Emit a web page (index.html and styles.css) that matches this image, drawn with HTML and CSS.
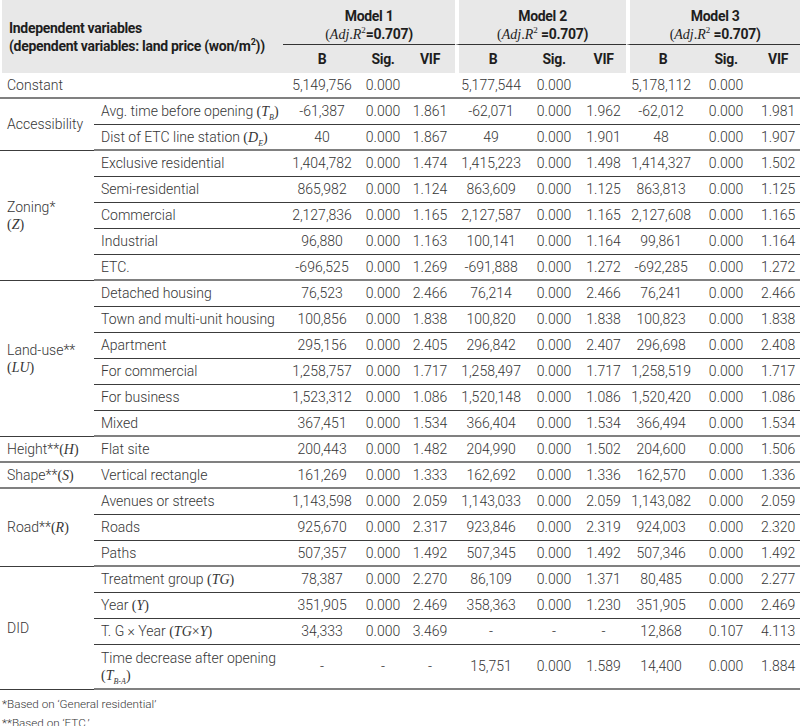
FILE: index.html
```html
<!DOCTYPE html>
<html>
<head>
<meta charset="utf-8">
<link rel="stylesheet" href="styles.css">
</head>
<body>
<table class="tbl">
<colgroup>
<col class="c-cat"><col class="c-item">
<col class="c-m1b"><col class="c-m1s"><col class="c-m1v">
<col class="c-m2b"><col class="c-m2s"><col class="c-m2v">
<col class="c-m3b"><col class="c-m3s"><col class="c-m3v">
</colgroup>
<thead>
<tr class="h1">
<th class="hl" colspan="2" rowspan="2">Independent variables<br>(dependent variables: land price (won/m<sup>2</sup>))</th>
<th class="hm" colspan="3"><div>Model 1</div><div><span class="m">(<i>Adj</i>.<i>R</i><sup>2</sup></span>=0.707)</div></th>
<th class="hm gap" colspan="3"><div>Model 2</div><div><span class="m">(<i>Adj</i>.<i>R</i><sup>2</sup></span> =0.707)</div></th>
<th class="hm gap" colspan="3"><div>Model 3</div><div><span class="m">(<i>Adj</i>.<i>R</i><sup>2</sup></span> =0.707)</div></th>
</tr>
<tr class="h2">
<th>B</th><th>Sig.</th><th>VIF</th>
<th class="gap">B</th><th>Sig.</th><th>VIF</th>
<th class="gap">B</th><th>Sig.</th><th>VIF</th>
</tr>
</thead>
<tbody>
<tr class="g">
<td class="cat" colspan="2">Constant</td>
<td>5,149,756</td><td>0.000</td><td></td>
<td>5,177,544</td><td>0.000</td><td></td>
<td>5,178,112</td><td>0.000</td><td></td>
</tr>
<tr class="s">
<td class="cat gb" rowspan="2">Accessibility</td>
<td class="item">Avg. time before opening <span class="m">(<i>T</i><sub>B</sub>)</span></td>
<td>-61,387</td><td>0.000</td><td>1.861</td>
<td>-62,071</td><td>0.000</td><td>1.962</td>
<td>-62,012</td><td>0.000</td><td>1.981</td>
</tr>
<tr class="g">
<td class="item">Dist of ETC line station <span class="m">(<i>D</i><sub>E</sub>)</span></td>
<td>40</td><td>0.000</td><td>1.867</td>
<td>49</td><td>0.000</td><td>1.901</td>
<td>48</td><td>0.000</td><td>1.907</td>
</tr>
<tr class="s">
<td class="cat gb" rowspan="5">Zoning*<br><span class="m">(<i>Z</i>)</span></td>
<td class="item">Exclusive residential</td>
<td>1,404,782</td><td>0.000</td><td>1.474</td>
<td>1,415,223</td><td>0.000</td><td>1.498</td>
<td>1,414,327</td><td>0.000</td><td>1.502</td>
</tr>
<tr class="s">
<td class="item">Semi-residential</td>
<td>865,982</td><td>0.000</td><td>1.124</td>
<td>863,609</td><td>0.000</td><td>1.125</td>
<td>863,813</td><td>0.000</td><td>1.125</td>
</tr>
<tr class="s">
<td class="item">Commercial</td>
<td>2,127,836</td><td>0.000</td><td>1.165</td>
<td>2,127,587</td><td>0.000</td><td>1.165</td>
<td>2,127,608</td><td>0.000</td><td>1.165</td>
</tr>
<tr class="s">
<td class="item">Industrial</td>
<td>96,880</td><td>0.000</td><td>1.163</td>
<td>100,141</td><td>0.000</td><td>1.164</td>
<td>99,861</td><td>0.000</td><td>1.164</td>
</tr>
<tr class="g">
<td class="item">ETC.</td>
<td>-696,525</td><td>0.000</td><td>1.269</td>
<td>-691,888</td><td>0.000</td><td>1.272</td>
<td>-692,285</td><td>0.000</td><td>1.272</td>
</tr>
<tr class="s">
<td class="cat gb" rowspan="6">Land-use**<br><span class="m">(<i>LU</i>)</span></td>
<td class="item">Detached housing</td>
<td>76,523</td><td>0.000</td><td>2.466</td>
<td>76,214</td><td>0.000</td><td>2.466</td>
<td>76,241</td><td>0.000</td><td>2.466</td>
</tr>
<tr class="s">
<td class="item">Town and multi-unit housing</td>
<td>100,856</td><td>0.000</td><td>1.838</td>
<td>100,820</td><td>0.000</td><td>1.838</td>
<td>100,823</td><td>0.000</td><td>1.838</td>
</tr>
<tr class="s">
<td class="item">Apartment</td>
<td>295,156</td><td>0.000</td><td>2.405</td>
<td>296,842</td><td>0.000</td><td>2.407</td>
<td>296,698</td><td>0.000</td><td>2.408</td>
</tr>
<tr class="s">
<td class="item">For commercial</td>
<td>1,258,757</td><td>0.000</td><td>1.717</td>
<td>1,258,497</td><td>0.000</td><td>1.717</td>
<td>1,258,519</td><td>0.000</td><td>1.717</td>
</tr>
<tr class="s">
<td class="item">For business</td>
<td>1,523,312</td><td>0.000</td><td>1.086</td>
<td>1,520,148</td><td>0.000</td><td>1.086</td>
<td>1,520,420</td><td>0.000</td><td>1.086</td>
</tr>
<tr class="g">
<td class="item">Mixed</td>
<td>367,451</td><td>0.000</td><td>1.534</td>
<td>366,404</td><td>0.000</td><td>1.534</td>
<td>366,494</td><td>0.000</td><td>1.534</td>
</tr>
<tr class="g">
<td class="cat">Height**<span class="m">(<i>H</i>)</span></td>
<td class="item">Flat site</td>
<td>200,443</td><td>0.000</td><td>1.482</td>
<td>204,990</td><td>0.000</td><td>1.502</td>
<td>204,600</td><td>0.000</td><td>1.506</td>
</tr>
<tr class="g">
<td class="cat">Shape**<span class="m">(<i>S</i>)</span></td>
<td class="item">Vertical rectangle</td>
<td>161,269</td><td>0.000</td><td>1.333</td>
<td>162,692</td><td>0.000</td><td>1.336</td>
<td>162,570</td><td>0.000</td><td>1.336</td>
</tr>
<tr class="s">
<td class="cat gb" rowspan="3">Road**<span class="m">(<i>R</i>)</span></td>
<td class="item">Avenues or streets</td>
<td>1,143,598</td><td>0.000</td><td>2.059</td>
<td>1,143,033</td><td>0.000</td><td>2.059</td>
<td>1,143,082</td><td>0.000</td><td>2.059</td>
</tr>
<tr class="s">
<td class="item">Roads</td>
<td>925,670</td><td>0.000</td><td>2.317</td>
<td>923,846</td><td>0.000</td><td>2.319</td>
<td>924,003</td><td>0.000</td><td>2.320</td>
</tr>
<tr class="g">
<td class="item">Paths</td>
<td>507,357</td><td>0.000</td><td>1.492</td>
<td>507,345</td><td>0.000</td><td>1.492</td>
<td>507,346</td><td>0.000</td><td>1.492</td>
</tr>
<tr class="s">
<td class="cat gb" rowspan="4">DID</td>
<td class="item">Treatment group <span class="m">(<i>TG</i>)</span></td>
<td>78,387</td><td>0.000</td><td>2.270</td>
<td>86,109</td><td>0.000</td><td>1.371</td>
<td>80,485</td><td>0.000</td><td>2.277</td>
</tr>
<tr class="s">
<td class="item">Year <span class="m">(<i>Y</i>)</span></td>
<td>351,905</td><td>0.000</td><td>2.469</td>
<td>358,363</td><td>0.000</td><td>1.230</td>
<td>351,905</td><td>0.000</td><td>2.469</td>
</tr>
<tr class="s">
<td class="item">T. G × Year <span class="m">(<i>TG</i>×<i>Y</i>)</span></td>
<td>34,333</td><td>0.000</td><td>3.469</td>
<td>-</td><td>-</td><td>-</td>
<td>12,868</td><td>0.107</td><td>4.113</td>
</tr>
<tr class="g tall">
<td class="item">Time decrease after opening<br><span class="m">(<i>T</i><sub>B-A</sub>)</span></td>
<td>-</td><td>-</td><td>-</td>
<td>15,751</td><td>0.000</td><td>1.589</td>
<td>14,400</td><td>0.000</td><td>1.884</td>
</tr>
</tbody>
</table>
<div class="notes">
<p>*Based on ‘General residential’</p>
<p>**Based on ‘ETC.’</p>
</div>
</body>
</html>
```

FILE: styles.css
```css
html, body {
  margin: 0;
  padding: 0;
  background: #fff;
}
body {
  font-family: Roboto, "Liberation Sans", sans-serif;
  color: #363636;
  width: 800px;
}
.tbl {
  width: 800px;
  table-layout: fixed;
  border-collapse: separate;
  border-spacing: 0;
  font-size: 14px;
  font-weight: 300;
}
.c-cat { width: 94px; }
.c-item { width: 189px; }
.c-m1b { width: 78px; }
.c-m1s { width: 44px; }
.c-m1v { width: 50px; }
.c-m2b { width: 72px; }
.c-m2s { width: 54px; }
.c-m2v { width: 45px; }
.c-m3b { width: 70px; }
.c-m3s { width: 60px; }
.c-m3v { width: 44px; }

thead th {
  background: #e8e8e8;
  color: #1e1e1e;
  font-weight: 700;
  font-size: 14px;
  letter-spacing: -0.3px;
  padding: 0;
  text-align: center;
  vertical-align: middle;
}
thead .hl {
  text-align: left;
  padding-left: 7px;
  line-height: 18px;
  border-left: 2px solid #fff;
}
thead sup {
  font-size: 9px;
  line-height: 0;
}
.h1 { height: 44px; }
.h1 .hm {
  border-bottom: 1px solid #333;
  line-height: 18px;
  vertical-align: top;
  padding-top: 7px;
}
.h2 { height: 28px; }
thead .gap {
  border-left: 4px solid #fff;
}
.m {
  font-family: "Liberation Serif", serif;
  font-weight: 400;
  letter-spacing: 0;
}
.m i {
  font-style: italic;
}
.m sub {
  font-size: 8px;
  line-height: 0;
  font-style: italic;
}
.m sup {
  font-size: 9px;
  line-height: 0;
}

tbody td {
  padding: 0;
  text-align: center;
  vertical-align: middle;
  line-height: 17px;
  white-space: nowrap;
}
tbody tr.s td {
  height: 25px;
  border-bottom: 1px solid #3c3c3c;
}
tbody tr.g td {
  height: 24px;
}
tbody tr.g td,
tbody td.gb {
  border-bottom: 2px solid #808080;
}
tbody tr.tall td {
  height: 43px;
}
tbody .cat {
  text-align: left;
  padding-left: 7px;
}
tbody .item {
  text-align: left;
  padding-left: 7px;
}
.notes {
  font-size: 11.7px;
  font-weight: 300;
  color: #363636;
  padding-left: 2px;
  padding-top: 5px;
}
.notes p {
  margin: 0;
  line-height: 19px;
}
```
